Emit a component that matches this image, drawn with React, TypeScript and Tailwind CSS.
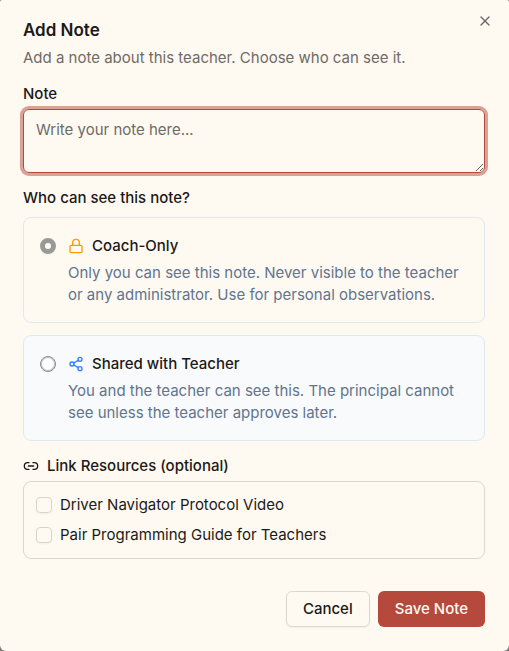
import { FC, useState } from "react";
import { Link2, Lock, Share2, X } from "lucide-react";

type Visibility = "coach" | "shared";

const options = [
    {
        id: "coach" as Visibility,
        title: "Coach-Only",
        description: "Only you can see this note. Never visible to the teacher or any administrator. Use for personal observations.",
        icon: <Lock size={16} className="text-[#fe9a00]" />,
        card: "border-[#e2e8f0]",
    },
    {
        id: "shared" as Visibility,
        title: "Shared with Teacher",
        description: "You and the teacher can see this. The principal cannot see unless the teacher approves later.",
        icon: <Share2 size={16} className="text-[#2b7fff]" />,
        card: "border-[#e2e8f0] bg-[#f8fafc]",
    },
];

const resources = ["Driver Navigator Protocol Video", "Pair Programming Guide for Teachers"];

const App: FC = () => {
    const [visibility, setVisibility] = useState<Visibility>("coach");
    const [note, setNote] = useState("");

    return (
        <div className="bg-[#7d7b78]">
            <div role="dialog" aria-labelledby="title" className="relative flex min-h-screen flex-col rounded-t-xs rounded-b-md bg-[#fefaf2] pt-[21px] pr-6 pb-6 pl-[23px] font-['Inter',sans-serif] text-[15px] leading-[22px] text-[#1c1917]">
                <button type="button" aria-label="Close" className="absolute top-[13px] right-4 text-[#6f6a66]">
                    <X size={16} />
                </button>

                <h2 id="title" className="text-[17px] leading-[18px] font-semibold">Add Note</h2>
                <p className="mt-2 text-[#6f6a66]">Add a note about this teacher. Choose who can see it.</p>

                <label htmlFor="note" className="mt-4 leading-[18px] font-medium">Note</label>
                <textarea
                    id="note"
                    value={note}
                    onChange={e => setNote(e.target.value)}
                    placeholder="Write your note here..."
                    className="mt-1.5 h-16 w-full shrink-0 rounded-md border border-[#b54a3c] px-3 py-[9px] ring-3 ring-[#b54a3c]/50 outline-none placeholder:text-[#6f6a66]"
                />

                <fieldset className="mt-4 flex flex-col gap-3">
                    <legend className="mb-2.5 leading-[18px] font-medium">Who can see this note?</legend>
                    {options.map(o => (
                        <label key={o.id} className={`flex items-start gap-3 rounded-lg border p-4 ${o.card}`}>
                            <input
                                type="radio"
                                name="visibility"
                                checked={visibility === o.id}
                                onChange={() => setVisibility(o.id)}
                                className="mt-1 size-4 shrink-0 appearance-none rounded-full border border-[#8a8886] bg-white inset-ring inset-ring-[#c4c2c0] checked:border-[5px] checked:border-[#9b9996] checked:inset-ring-0"
                            />
                            <span className="flex flex-col gap-1">
                                <span className="flex items-center gap-2 leading-6 font-medium">
                                    {o.icon}
                                    {o.title}
                                </span>
                                <span className="text-[#62748e]">{o.description}</span>
                            </span>
                        </label>
                    ))}
                </fieldset>

                <fieldset className="mt-4">
                    <legend className="mb-1.5 flex items-center gap-2 leading-[18px] font-medium">
                        <Link2 size={16} />
                        Link Resources (optional)
                    </legend>
                    <div className="flex flex-col gap-2 rounded-lg border border-[#dcd7d0] p-3">
                        {resources.map(r => (
                            <label key={r} className="flex items-center gap-2">
                                <input type="checkbox" className="size-4 shrink-0 appearance-none rounded-sm border border-[#dcd4ca] shadow-xs checked:bg-[#b54a3c]" />
                                {r}
                            </label>
                        ))}
                    </div>
                </fieldset>

                <div className="mt-8 flex justify-end gap-2 font-medium">
                    <button type="button" className="h-9 rounded-md border border-[#dcd7d0] px-4 shadow-xs">Cancel</button>
                    <button type="button" className="h-9 rounded-md bg-[#b54a3c] px-[17px] text-[#fefaf2]">Save Note</button>
                </div>
            </div>
        </div>
    );
}

export default App;
